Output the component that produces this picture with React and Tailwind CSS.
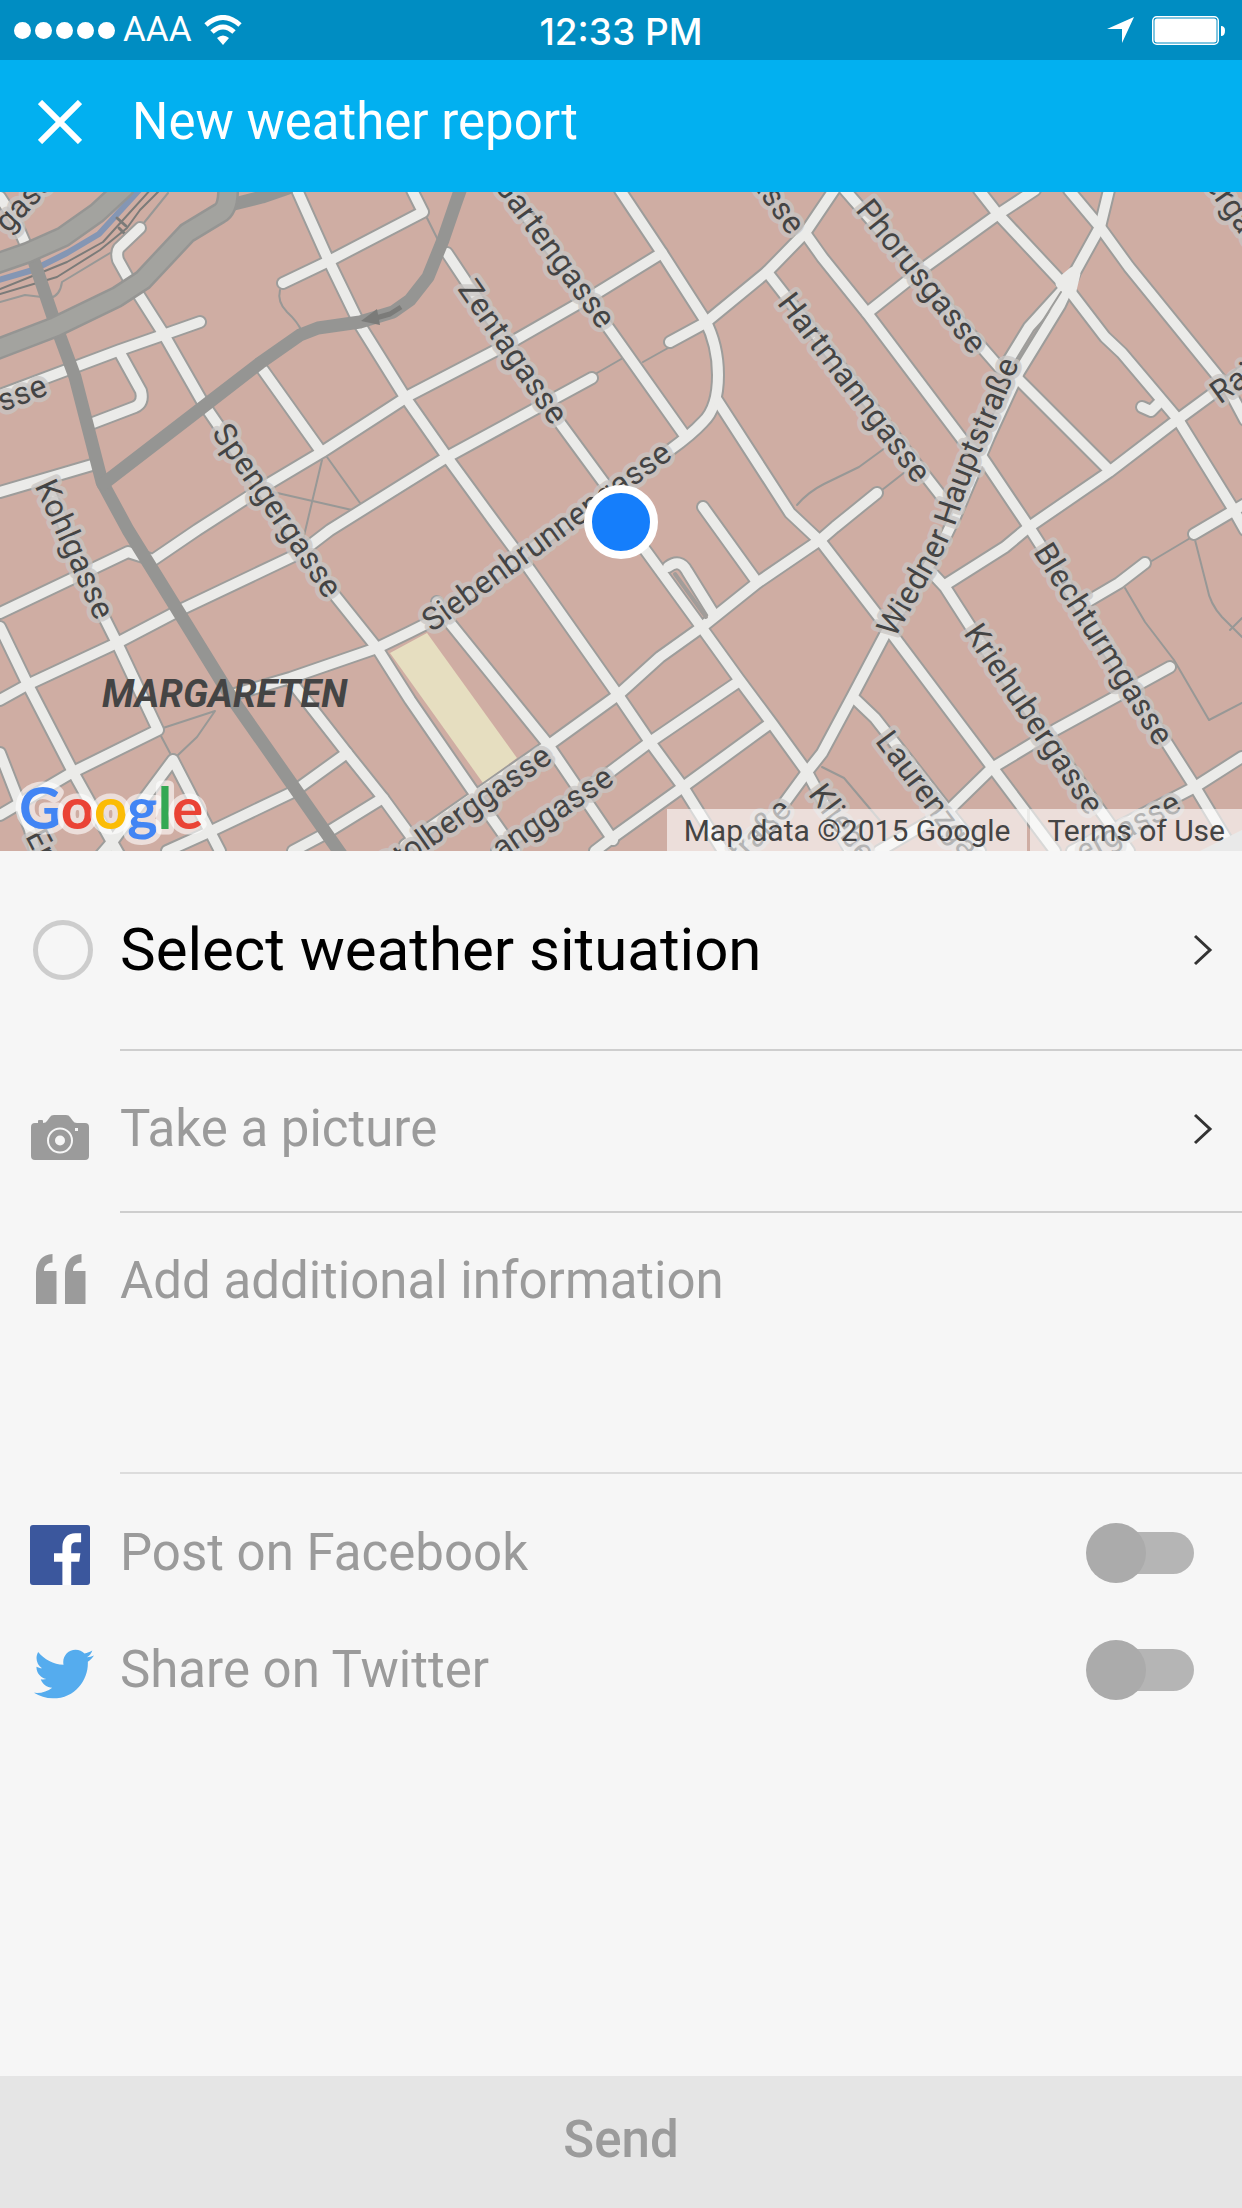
import React, { useState } from 'react';
import { FaTwitter } from 'react-icons/fa';

const streets = [
    'M0 197L15 220L28 250',
    'M140 228L119 248Q116 252 118 260L128 278L163 333L203 403L333 593L377 648L410 700L470 787L515 851',
    'M200 322L163 335L120 350L0 395',
    'M120 353L141 391Q144 403 135 407L93 423',
    'M0 492L92 465',
    'M297 190L327 257L360 325L405 397L447 457L493 520L530 570L618 695L650 742L683 787L723 851',
    'M283 283L327 262L423 212L412 190',
    'M263 370L320 450',
    'M662 253L597 293L510 343L410 395L322 452L270 483L197 530L153 560L128 552L0 613',
    'M592 378L447 457L410 480L330 530L300 553L180 610L117 643L27 685L0 700',
    'M447 253L560 423L607 487L643 547L702 628L738 678L773 725L807 772L850 851',
    'M500 180L610 330L683 433',
    'M620 190L662 253L705 320Q718 345 718 375Q718 408 703 422Q692 434 670 450L560 528L430 622L410 632L377 648L290 678L235 694',
    'M717 400L790 513L822 543L889 630L992 767L1055 851',
    'M670 342L705 323L767 272L805 233L834 190',
    'M767 272L942 497',
    'M805 233L822 257L867 313L965 443L982 457L1029 527L1195 787L1230 845',
    'M845 190L999 367L1019 380L1109 470',
    'M1035 190L997 215L925 267L867 313',
    'M979 190L997 213L1069 290L1105 337L1122 353L1177 418L1232 507L1245 530',
    'M1069 190L1100 227L1129 267L1229 390L1245 420',
    'M1109 190L1100 227L1069 283L1029 327L1007 363',
    'M1074 275L1060 305L1019 372L989 437L955 517L940 548L889 627L852 697L822 753L807 772L777 813L735 851',
    'M1245 370L1177 420L1109 472L1029 527L1005 547L945 585',
    'M932 573L945 587L979 640L1105 817L1129 851',
    'M1142 407L1151 411L1160 402',
    'M1194 534L1245 504',
    'M1145 563L1119 583L1085 603',
    'M1170 667L1055 730L992 768L949 810L879 851',
    'M1242 757L1195 787L1072 851',
    'M854 698L875 718L955 820L980 851',
    'M877 493L835 527L820 540L757 583L702 627L660 657L618 695L553 742L405 845',
    'M738 682L650 742L610 772L497 851',
    'M768 725L683 787L612 838L595 851',
    'M437 602L450 623L547 743L613 840',
    'M703 507L757 582',
    'M668 567Q680 558 687 571L713 613',
    'M45 480L92 593L117 643L158 730L73 772L0 815',
    'M0 627L28 685L73 772L112 842L100 856',
    'M0 753L30 830L35 851',
    'M120 856L112 842L173 760L220 851',
    'M290 680L347 753L383 798L418 846',
    'M347 753L293 792L207 833L167 851',
    'M383 798L323 835L293 851',
];

const footpaths = [
    'M322 460L303 540M327 457L360 503M273 492L352 510',
    'M280 290Q277 302 287 312Q298 322 302 332',
    'M427 218L438 240M597 373L623 358M643 362L668 348',
    'M797 505Q808 492 824 484L859 467L885 448M882 490L905 472',
    'M1192 537L1150 562M1195 540L1207 587Q1210 604 1222 617L1242 637',
    'M1125 588L1145 622L1174 660L1209 720L1242 703',
    'M822 767L844 778L882 823',
    'M163 728L215 711L197 737L178 755M161 736L170 753',
    'M0 302L25 295L50 298Q60 296 62 282L110 253M143 224L168 193',
    'M1230 630L1242 618',
];

const highways = [
    'M33 258L55 323L75 377L102 482L128 530L167 593L233 700L343 857',
    'M103 484L203 407L260 363L300 335L318 328L360 322L393 312L410 300L428 277L443 240L455 205L461 188',
    'M230 205L262 197L288 188',
];

const embankments = [
    'M-5 264L27 253L63 237L97 213L124 188',
    'M-5 350L55 327L117 297L143 280L187 233L220 213Q229 208 228 186',
];

const labels = [
    { id: 'l1', text: 'gasse', d: 'M-2 230L80 142' },
    { id: 'l2', text: 'sse', d: 'M-5 404L80 372' },
    { id: 'l3', text: 'Spengergasse', d: 'M217 424L362 635' },
    { id: 'l4', text: 'Kohlgasse', d: 'M42 478L128 669' },
    { id: 'l5', text: 'Zentagasse', d: 'M463 280L595 472' },
    { id: 'l6', text: 'Gartengasse', d: 'M498 175L635 362' },
    { id: 'l7', text: 'gasse', d: 'M745 158L820 262' },
    { id: 'l8', text: 'Siebenbrunnengasse', d: 'M423 627L715 415' },
    { id: 'l9', text: 'Hartmanngasse', d: 'M782 294L965 533' },
    { id: 'l10', text: 'Phorusgasse', d: 'M860 201L1015 394' },
    { id: 'l11', text: 'Wiedner Hauptstraße', d: 'M884 637L928 560Q946 526 954 495Q968 455 985 420L1035 298' },
    { id: 'l12', text: 'Kriehubergasse', d: 'M969 624L1130 862' },
    { id: 'l13', text: 'Blechturmgasse', d: 'M1039 543L1200 798' },
    { id: 'l14', text: 'Laurenzgasse', d: 'M880 732L1010 905' },
    { id: 'l15', text: 'Kliebergasse', d: 'M813 785L910 913' },
    { id: 'l16', text: 'Stolberggasse', d: 'M378 873L600 716' },
    { id: 'l17', text: 'anggasse', d: 'M492 854L650 747' },
    { id: 'l18', text: 'traße', d: 'M732 861L830 758' },
    { id: 'l19', text: 'ergasse', d: 'M1075 856L1220 778' },
    { id: 'l20', text: 'ergasse', d: 'M1210 175L1285 282' },
    { id: 'l21', text: 'Rainer', d: 'M1211 399L1310 328' },
    { id: 'l22', text: 'Ernst', d: 'M32 828L80 920' },
];

const StreetMap = () => (
    <svg
        className="block h-full w-full"
        viewBox="0 192 1242 659"
        preserveAspectRatio="xMidYMid slice"
        role="img"
        aria-label="Map of Margareten"
        fontFamily="Roboto, sans-serif"
    >
        <rect x="0" y="192" width="1242" height="659" fill="#cfada3" />
        <path d="M390 653L427 633L517 758L483 783Z" fill="#e6dec0" />
        <g fill="none" strokeLinecap="round" strokeLinejoin="round">
            <path d="M-5 281L33 270L67 253L99 234L141 188" stroke="#8496b4" strokeWidth="6" />
            <path d="M0 289L40 273L67 262L103 242L152 188M0 294L57 277L100 250L127 228L140 210L162 188" stroke="#7b7b79" strokeWidth="2" />
            <path d="M117 218L126 226M119 228L125 234" stroke="#7b7b79" strokeWidth="3" />
            <g stroke="#989896" strokeWidth="2">
                {footpaths.map((d) => <path key={d} d={d} />)}
            </g>
            <g stroke="#9d9d9b" strokeWidth="14">
                {streets.map((d) => <path key={d} d={d} />)}
            </g>
            <g stroke="#ebebe9" strokeWidth="10">
                {streets.map((d) => <path key={d} d={d} />)}
                <path d="M1062 283L1074 273L1070 290" strokeWidth="13" />
            </g>
            <path d="M675 574L706 617" stroke="#a19d9a" strokeWidth="4" />
            <path d="M1061 292L1014 366" stroke="#9d9d9b" strokeWidth="2" />
            <g stroke="#959593" strokeWidth="13">
                {highways.map((d) => <path key={d} d={d} />)}
            </g>
            <g stroke="#959593" strokeWidth="22">
                {embankments.map((d) => <path key={d} d={d} />)}
            </g>
            <g stroke="#a3a39f" strokeWidth="17">
                {embankments.map((d) => <path key={d} d={d} />)}
            </g>
            <path d="M401 307L390 314L376 318" stroke="#7b7b79" strokeWidth="5" strokeLinecap="butt" />
        </g>
        <path d="M361 321L377 309L380 325Z" fill="#7b7b79" />
        <path d="M1200 851L1242 830V851Z" fill="#c9c9c9" />
        <defs>
            {labels.map((label) => <path key={label.id} id={label.id} d={label.d} />)}
        </defs>
        <g fontSize="32" fill="#444" stroke="#c9c6c4" strokeOpacity="0.75" strokeWidth="9" strokeLinejoin="round" paintOrder="stroke">
            {labels.map((label) => (
                <text key={label.id} dy="10">
                    <textPath href={`#${label.id}`} startOffset="4">{label.text}</textPath>
                </text>
            ))}
        </g>
        <text x="102" y="707" fontSize="38" fontWeight="700" fontStyle="italic" fill="#444">MARGARETEN</text>
        <text
            x="19"
            y="829"
            fontFamily="Lato, sans-serif"
            fontSize="58"
            fontWeight="700"
            stroke="#fff"
            strokeOpacity="0.6"
            strokeWidth="11"
            strokeLinejoin="round"
            paintOrder="stroke"
        >
            <tspan fill="#4285f4">G</tspan>
            <tspan fill="#ea4335">o</tspan>
            <tspan fill="#fbbc05">o</tspan>
            <tspan fill="#4285f4">g</tspan>
            <tspan fill="#34a853">l</tspan>
            <tspan fill="#ea4335">e</tspan>
        </text>
    </svg>
);

const StatusBar = () => (
    <div className="grid h-[60px] grid-cols-3 items-center bg-[#008dc2] text-white">
        <div className="flex items-center pl-[14px]">
            <div className="flex gap-1">
                {[1, 2, 3, 4, 5].map((dot) => (
                    <span key={dot} className="h-[17px] w-[17px] rounded-full bg-white"></span>
                ))}
            </div>
            <span className="ml-2 text-[35px] leading-10">AAA</span>
            <svg className="ml-3 h-[30px] w-[38px]" viewBox="0 0 38 30" fill="none" stroke="#fff" strokeWidth="5">
                <path d="M2 10Q19 -5 36 10" />
                <path d="M8 17Q19 7 30 17" />
                <path d="M13 23Q19 18 25 23L19 30Z" fill="#fff" stroke="none" />
            </svg>
        </div>
        <p className="pt-1 text-center font-[Inter,sans-serif] text-[37px] leading-10 font-medium">12:33 PM</p>
        <div className="flex items-center justify-end gap-[18px] pr-[17px]">
            <svg className="h-[26px] w-[27px]" viewBox="0 0 27 26" fill="#fff">
                <path d="M27 0L15 26V12H0Z" />
            </svg>
            <svg className="h-[29px] w-[73px]" viewBox="0 0 73 29" fill="#fff">
                <rect x="0.75" y="0.75" width="65.5" height="27.5" rx="4" fill="none" stroke="#fff" strokeWidth="1.5" />
                <rect x="2.5" y="2.5" width="62" height="24" rx="2.5" />
                <path d="M69 10Q73 10 73 14.5Q73 20 69 20Z" />
            </svg>
        </div>
    </div>
);

const Chevron = () => (
    <svg className="h-8 w-5 shrink-0" viewBox="0 0 20 32" fill="none" stroke="#333" strokeWidth="3">
        <path d="M2 2L17 16L2 30" />
    </svg>
);

const CameraIcon = () => (
    <svg className="h-[45px] w-[58px]" viewBox="0 0 58 45" fill="#9b9b9b">
        <path d="M4 8H7V6Q7 5 8 5H11Q12 5 12 6V8Q15 8 16 6L19 2Q20 0 23 0H35Q38 0 39 2L42 6Q43 8 46 8H54Q58 8 58 12V41Q58 45 54 45H4Q0 45 0 41V12Q0 8 4 8Z" />
        <circle cx="29" cy="25.5" r="12" fill="none" stroke="#f6f6f6" strokeWidth="2" />
        <circle cx="29" cy="25.5" r="5" fill="#f6f6f6" />
        <rect x="44" y="13" width="3" height="3" fill="#f6f6f6" />
    </svg>
);

const QuoteIcon = () => (
    <svg className="h-[50px] w-[50px]" viewBox="0 0 50 50" fill="#9b9b9b">
        <path d="M0 50V20C0 8 6 0.5 16.5 0V8.5C11 9 8 11.5 8 17H20.5V50Z" />
        <path d="M29 50V20C29 8 35 0.5 45.5 0V8.5C40 9 37 11.5 37 17H49.5V50Z" />
    </svg>
);

const FacebookIcon = () => (
    <svg className="h-[60px] w-[60px]" viewBox="0 0 60 60">
        <rect width="60" height="60" rx="3" fill="#3b579d" />
        <path
            fill="#fff"
            d="M32.4 60V36.7H24V28.3H32.4V22C32.4 13.5 37.4 8.3 45.4 8.3H51.1V17.3H46.6C42.6 17.3 41.2 19 41.2 22.8V28.3H50.4L49.2 36.7H41.2V60Z"
        />
    </svg>
);

const ShareRow = ({ id, icon, text, checked, onChange }) => (
    <div className="flex h-[117px] items-center pr-12">
        <span className="w-[120px] pt-1 pl-[30px]">{icon}</span>
        <label htmlFor={id} className="flex-1">{text}</label>
        <span className="relative flex h-[60px] w-[108px] items-center">
            <input
                id={id}
                type="checkbox"
                role="switch"
                checked={checked}
                onChange={onChange}
                className="peer ml-3 h-[42px] w-24 appearance-none rounded-full bg-[#b5b5b5] checked:bg-[#7fd3f5]"
            />
            <span className="pointer-events-none absolute left-0 h-[60px] w-[60px] rounded-full bg-[#ababab] peer-checked:right-0 peer-checked:left-auto peer-checked:bg-[#00b0f0]"></span>
        </span>
    </div>
);

const App = () => {
    const [info, setInfo] = useState('');
    const [facebook, setFacebook] = useState(false);
    const [twitter, setTwitter] = useState(false);

    return (
        <div className="flex min-h-screen flex-col bg-[#f6f6f6] font-[Roboto,sans-serif] text-[51px] leading-[60px] text-[#9b9b9b]">
            <StatusBar />
            <header className="flex h-[132px] items-center bg-[#02b0f0] pb-2 text-white">
                <button type="button" aria-label="Close" className="flex w-[132px] pl-[38px]">
                    <svg className="h-11 w-11" viewBox="0 0 44 44" stroke="#fff" strokeWidth="6">
                        <path d="M2 2L42 42M42 2L2 42" />
                    </svg>
                </button>
                <h1>New weather report</h1>
            </header>

            <section className="relative h-[659px] overflow-hidden">
                <StreetMap />
                <span className="absolute top-1/2 left-1/2 h-[74px] w-[74px] -translate-x-1/2 -translate-y-1/2 rounded-full border-8 border-white bg-[#157efb]"></span>
                <div className="absolute right-0 bottom-0 flex gap-[3px] text-[30px] leading-[42px] text-[#444]">
                    <span className="bg-white/60 px-[17px] pt-[2px] leading-10">Map data ©2015 Google</span>
                    <a href="#terms" className="bg-white/60 px-[17px] pt-[2px] leading-10">Terms of Use</a>
                </div>
            </section>

            <main className="flex-1">
                <button type="button" className="flex h-[198px] w-full items-center text-left text-[60px] text-black">
                    <span className="w-[120px] pl-[33px]">
                        <span className="block h-[60px] w-[60px] rounded-full border-[5px] border-[#cdcdcd]"></span>
                    </span>
                    <span className="flex-1">Select weather situation</span>
                    <span className="pr-[29px]"><Chevron /></span>
                </button>
                <hr className="ml-[120px] border-t-2 border-[#cecece]" />
                <button type="button" className="flex h-40 w-full items-center pb-1 text-left">
                    <span className="w-[120px] pt-4 pl-[31px]"><CameraIcon /></span>
                    <span className="flex-1">Take a picture</span>
                    <span className="pr-[29px]"><Chevron /></span>
                </button>
                <hr className="ml-[120px] border-t-2 border-[#cecece]" />
                <div className="flex h-[259px] pt-[38px]">
                    <label htmlFor="info" aria-label="Additional information" className="w-[120px] pt-[3px] pl-9">
                        <QuoteIcon />
                    </label>
                    <textarea
                        id="info"
                        value={info}
                        onChange={(e) => setInfo(e.target.value)}
                        placeholder="Add additional information"
                        className="flex-1 resize-none placeholder-[#9b9b9b] focus:outline-none"
                    />
                </div>
                <hr className="ml-[120px] border-t-2 border-[#dcdcdc]" />
                <div className="pt-5">
                    <ShareRow
                        id="facebook"
                        icon={<FacebookIcon />}
                        text="Post on Facebook"
                        checked={facebook}
                        onChange={(e) => setFacebook(e.target.checked)}
                    />
                    <ShareRow
                        id="twitter"
                        icon={<FaTwitter className="mt-1 ml-1 h-[60px] w-[60px] text-[#55acee]" />}
                        text="Share on Twitter"
                        checked={twitter}
                        onChange={(e) => setTwitter(e.target.checked)}
                    />
                </div>
            </main>

            <button type="button" className="h-[132px] bg-[#e5e5e5] pb-1 font-medium">Send</button>
        </div>
    );
};

export default App;
